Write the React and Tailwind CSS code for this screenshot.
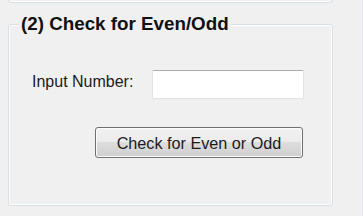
import React from 'react'

const App = () => {
    return (
        <div className="w-[363px] h-[216px] bg-[#f0f0f0] border-r border-[#e2e6ea] overflow-hidden" style={{ fontFamily: '"Liberation Sans", Arial, sans-serif' }}>

            {/* Bottom edge of the previous group box */}
            <div className="ml-[8px] w-[325px] h-[3px] border-x border-b border-[#d5dfe5] rounded-b-[3px] shadow-[inset_0_-1px_0_#ffffff]"></div>

            {/* (2) group box */}
            <fieldset className="ml-[8px] mt-[10px] w-[325px] h-[193px] border border-[#d5dfe5] rounded-[3px] shadow-[inset_0_0_0_1px_#ffffff] pl-[10px] pr-0 pb-0">
                <legend className="px-[2px] bg-[#f0f0f0] text-[18.8px] leading-[22px] font-bold text-[#111]">
                    (2) Check for Even/Odd
                </legend>

                <div className="flex flex-col -ml-[10px]">
                    {/* Input row */}
                    <div className="flex items-center mt-[35px]">
                        <span className="ml-[23px] w-[120px] text-[16px] leading-[18px] text-[#1b1b1b] -mt-[5px]">Input Number:</span>
                        <input
                            type="text"
                            className="w-[152px] h-[29px] bg-white border border-[#e2e3ea] border-t-[#abadb3] rounded-[2px] outline-none px-1 text-[16px]"
                        />
                    </div>

                    {/* Button */}
                    <button className="ml-[86px] mt-[28px] w-[208px] h-[31px] border border-[#707070] rounded-[3px] bg-[linear-gradient(to_bottom,#f2f2f2_0%,#ebebeb_50%,#dddddd_50%,#cfcfcf_100%)] shadow-[inset_0_0_0_1px_#fbfbfb] text-[16.2px] leading-[18px] text-[#1b1b1b]">
                        Check for Even or Odd
                    </button>
                </div>
            </fieldset>
        </div>
    )
}

export default App
